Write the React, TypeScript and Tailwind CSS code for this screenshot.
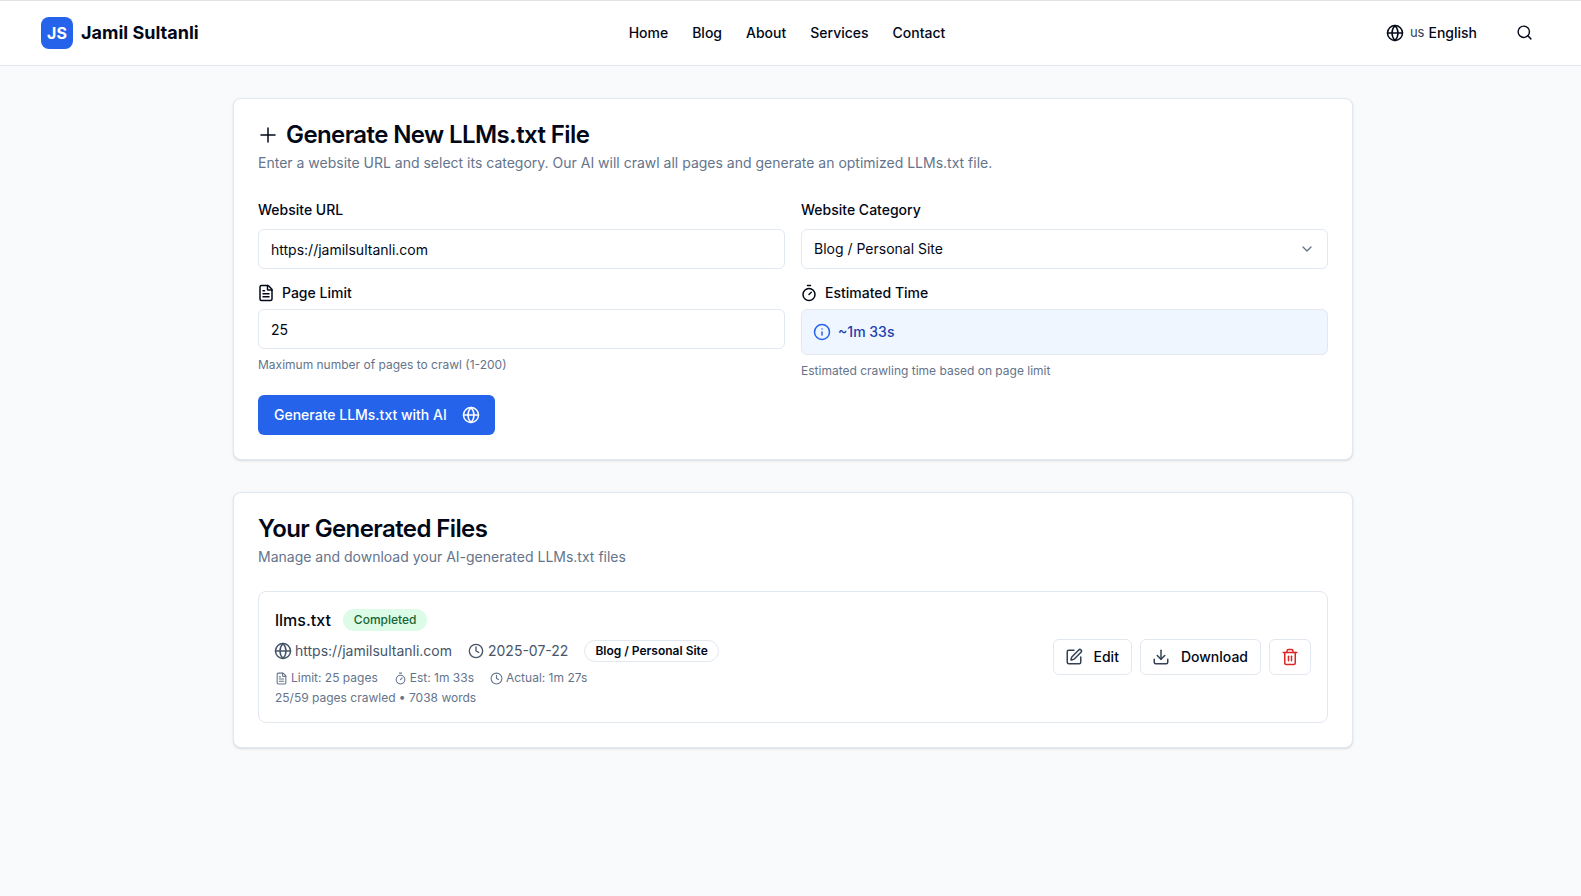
import { Globe, Search, Plus, ChevronDown, Info, Timer, Clock, SquarePen, Trash2, Download, FileText } from 'lucide-react'

const navLinks = ['Home', 'Blog', 'About', 'Services', 'Contact']

const App = () => {
  return (
    <div className="min-h-[896px] bg-[#f8fafc] font-['Inter',sans-serif] text-[#020817]">
      <header className="flex h-[66px] items-center justify-between border-t border-b border-[#e2e8f0] border-t-[#e2e2e2] bg-white pl-[41px] pr-[48px]">
        <div className="flex w-[400px] items-center gap-2">
          <div className="flex h-8 w-8 items-center justify-center rounded-lg bg-[#2563eb] text-base font-bold text-white">
            JS
          </div>
          <span className="text-lg font-bold">Jamil Sultanli</span>
        </div>
        <nav className="flex items-center gap-6">
          {navLinks.map((link) => (
            <a key={link} className="text-sm font-medium">
              {link}
            </a>
          ))}
        </nav>
        <div className="flex w-[400px] items-center justify-end">
          <Globe className="h-[18px] w-[18px]" />
          <span className="ml-1.5 text-[13px] text-[#334155]">us</span>
          <span className="ml-1 text-sm font-medium">English</span>
          <Search className="-mt-0.5 ml-[39px] h-[17px] w-[17px]" />
        </div>
      </header>

      <main className="flex flex-col items-center gap-8 pl-[5px] pt-8">
        <section className="w-[1120px] rounded-lg border border-[#e2e8f0] bg-white p-6 shadow-sm">
          <h2 className="flex items-center gap-2 text-2xl leading-none font-semibold tracking-tight">
            <Plus className="-m-0.5 h-6 w-6" strokeWidth={1.5} />
            Generate New LLMs.txt File
          </h2>
          <p className="mt-1.5 text-sm text-[#64748b]">
            Enter a website URL and select its category. Our AI will crawl all pages and generate an optimized LLMs.txt file.
          </p>

          <div className="mt-6 grid grid-cols-2 gap-x-4 gap-y-[14px]">
            <div>
              <label className="text-sm font-medium">Website URL</label>
              <div className="mt-2 flex h-10 items-center rounded-md border border-[#e2e8f0] px-3 pt-px text-sm">
                https://jamilsultanli.com
              </div>
            </div>
            <div>
              <label className="text-sm font-medium">Website Category</label>
              <div className="mt-2 flex h-10 items-center justify-between rounded-md border border-[#e2e8f0] px-3 text-sm">
                Blog / Personal Site
                <ChevronDown className="h-4 w-4 text-[#64748b]" />
              </div>
            </div>
            <div>
              <label className="flex items-center gap-2 text-sm font-medium">
                <FileText className="-m-px h-[18px] w-[18px]" />
                Page Limit
              </label>
              <div className="mt-1.5 flex h-10 items-center rounded-md border border-[#e2e8f0] px-3 pt-px text-sm">
                25
              </div>
              <p className="mt-2 text-xs text-[#64748b]">Maximum number of pages to crawl (1-200)</p>
            </div>
            <div>
              <label className="flex items-center gap-2 text-sm font-medium">
                <Timer className="-m-px h-[18px] w-[18px]" />
                Estimated Time
              </label>
              <div className="mt-1.5 flex h-[46px] items-center gap-2 rounded-md border border-[#e2e8f0] bg-[#eff6ff] px-3 text-sm font-medium text-[#1e40af]">
                <Info className="-m-px h-[18px] w-[18px] text-[#2563eb]" />
                ~1m 33s
              </div>
              <p className="mt-2 text-xs text-[#64748b]">Estimated crawling time based on page limit</p>
            </div>
          </div>

          <button className="mt-4 flex h-10 items-center gap-4 rounded-md bg-[#2563eb] px-4 text-sm font-medium text-white">
            Generate LLMs.txt with AI
            <Globe className="-m-px h-[18px] w-[18px]" />
          </button>
        </section>

        <section className="w-[1120px] rounded-lg border border-[#e2e8f0] bg-white p-6 shadow-sm">
          <h2 className="text-2xl leading-none font-semibold tracking-tight">Your Generated Files</h2>
          <p className="mt-1.5 text-sm text-[#64748b]">Manage and download your AI-generated LLMs.txt files</p>

          <div className="mt-6 flex items-center justify-between rounded-lg border border-[#e2e8f0] p-4">
            <div>
              <div className="flex items-center gap-3">
                <span className="font-medium">llms.txt</span>
                <span className="rounded-full bg-[#dcfce7] px-[11px] py-[3px] text-xs font-medium text-[#166534]">Completed</span>
              </div>
              <div className="mt-2 flex items-center gap-4 text-sm text-[#475569]">
                <span className="flex items-center gap-1">
                  <Globe className="-m-px h-[18px] w-[18px]" />
                  https://jamilsultanli.com
                </span>
                <span className="flex items-center gap-1">
                  <Clock className="h-4 w-4" />
                  2025-07-22
                </span>
                <span className="rounded-full border border-[#e2e8f0] px-2.5 py-0.5 text-xs font-semibold text-[#020817]">
                  Blog / Personal Site
                </span>
              </div>
              <div className="mt-2 flex items-center gap-4 text-xs text-[#64748b]">
                <span className="flex items-center gap-1">
                  <FileText className="-my-px -mr-px h-[13px] w-[13px]" />
                  Limit: 25 pages
                </span>
                <span className="flex items-center gap-1">
                  <Timer className="-my-px -mr-px h-[13px] w-[13px]" />
                  Est: 1m 33s
                </span>
                <span className="flex items-center gap-1">
                  <Clock className="-my-px -mr-px h-[13px] w-[13px]" />
                  Actual: 1m 27s
                </span>
              </div>
              <p className="mt-1 text-xs text-[#64748b]">25/59 pages crawled • 7038 words</p>
            </div>
            <div className="flex items-center gap-2">
              <button className="flex h-9 items-center gap-3 rounded-md border border-[#e2e8f0] px-3 text-sm font-medium">
                <SquarePen className="-m-px h-[18px] w-[18px] text-[#334155]" />
                Edit
              </button>
              <button className="flex h-9 items-center gap-3 rounded-md border border-[#e2e8f0] px-3 text-sm font-medium">
                <Download className="-m-px h-[18px] w-[18px] text-[#334155]" />
                Download
              </button>
              <button className="flex h-9 w-[42px] items-center justify-center rounded-md border border-[#e2e8f0] text-[#dc2626]">
                <Trash2 className="h-[18px] w-[18px]" />
              </button>
            </div>
          </div>
        </section>
      </main>
    </div>
  )
}

export default App
